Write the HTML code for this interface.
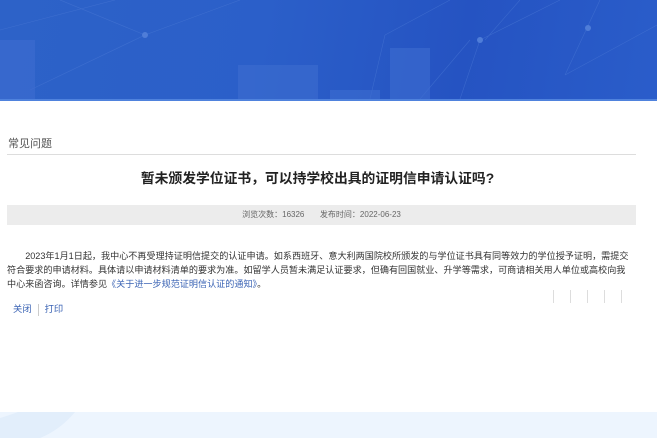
<!DOCTYPE html>
<html><head><meta charset="utf-8"><style>
body{margin:0;width:657px;height:438px;overflow:hidden;background:#fff;font-family:"Liberation Sans","Noto Sans CJK SC",sans-serif;position:relative}
.ban{position:absolute;left:0;top:0;width:657px;height:99px;background:linear-gradient(100deg,#2d62c8 0%,#2b5fc9 40%,#2553c2 70%,#2a5dca 100%);overflow:hidden}
.ban2{position:absolute;left:0;top:99px;width:657px;height:2px;background:#4f82dd}
.hd{position:absolute;left:8px;top:135px;font-size:11px;color:#555}
.ln{position:absolute;left:7px;top:154px;width:629px;height:1px;background:#ddd}
h1{position:absolute;left:0;width:635px;top:167px;margin:0;text-align:center;font-size:13.8px;font-weight:bold;color:#222}
.bar{position:absolute;left:7px;top:205px;width:629px;height:20px;background:#ececec;font-size:8px;color:#666;text-align:center;line-height:20px}
.p{position:absolute;left:7px;top:249px;width:627px;font-size:9.1px;line-height:14px;color:#333;text-indent:2em}
.p a{color:#3a63b4;text-decoration:none}
.lk{position:absolute;left:13px;top:301px;font-size:9.3px;color:#3a63b4}
.lk span{display:inline-block;width:1px;height:12px;background:#ccc;vertical-align:middle;margin:0 6px}
.bt{position:absolute;left:0;top:412px;width:657px;height:26px;background:#edf5fe}
.sh{position:absolute;top:290px;width:1px;height:13px;background:#ddd}
</style></head><body>
<div class="ban">
<svg width="657" height="99" style="position:absolute;left:0;top:0"><g stroke="#4f7dd8" stroke-width="0.6" fill="none" opacity="0.5"><path d="M0 30L115 0M30 90L145 35L240 0M145 35L60 0M385 35L370 99M385 35L450 0M480 40L460 99M480 40L560 0M470 40L420 99M565 75L600 0M565 75L657 25M485 40L520 0"/></g><g fill="#3d6dd0" opacity="0.6"><rect x="390" y="48" width="40" height="51"/><rect x="330" y="90" width="50" height="9"/><rect x="238" y="65" width="80" height="34"/><rect x="0" y="40" width="35" height="59"/></g><circle cx="145" cy="35" r="3" fill="#4f7dd8"/><circle cx="480" cy="40" r="3" fill="#4f7dd8"/><circle cx="588" cy="28" r="3" fill="#4f7dd8"/></svg>
</div>
<div class="ban2"></div>
<div class="hd">常见问题</div>
<div class="ln"></div>
<h1>暂未颁发学位证书，可以持学校出具的证明信申请认证吗?</h1>
<div class="bar">浏览次数：16326 &nbsp;&nbsp;&nbsp;&nbsp;&nbsp; 发布时间：2022-06-23</div>
<div class="p">2023年1月1日起，我中心不再受理持证明信提交的认证申请。如系西班牙、意大利两国院校所颁发的与学位证书具有同等效力的学位授予证明，需提交符合要求的申请材料。具体请以申请材料清单的要求为准。如留学人员暂未满足认证要求，但确有回国就业、升学等需求，可商请相关用人单位或高校向我中心来函咨询。详情参见<a>《关于进一步规范证明信认证的通知》</a>。</div>
<div class="lk">关闭<span></span>打印</div>
<div class="sh" style="left:553px"></div><div class="sh" style="left:570px"></div><div class="sh" style="left:587px"></div><div class="sh" style="left:604px"></div><div class="sh" style="left:621px"></div>
<div class="bt"><svg width="90" height="26" style="position:absolute;left:0;top:0"><path d="M0 6Q10 3 18 0L75 0Q60 18 40 26L0 26Z" fill="#e2eefb"/></svg></div>
</body></html>
